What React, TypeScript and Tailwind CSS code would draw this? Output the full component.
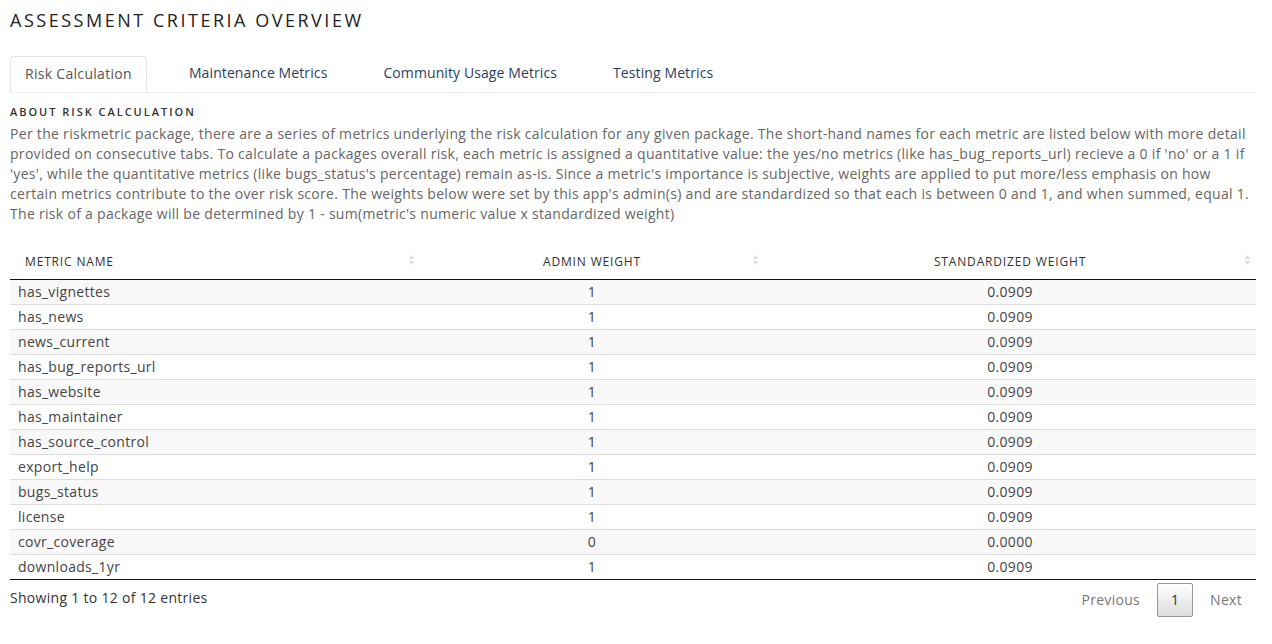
import React from "react";

type Row = { name: string; admin: number; std: string };

const rows: Row[] = [
  { name: "has_vignettes", admin: 1, std: "0.0909" },
  { name: "has_news", admin: 1, std: "0.0909" },
  { name: "news_current", admin: 1, std: "0.0909" },
  { name: "has_bug_reports_url", admin: 1, std: "0.0909" },
  { name: "has_website", admin: 1, std: "0.0909" },
  { name: "has_maintainer", admin: 1, std: "0.0909" },
  { name: "has_source_control", admin: 1, std: "0.0909" },
  { name: "export_help", admin: 1, std: "0.0909" },
  { name: "bugs_status", admin: 1, std: "0.0909" },
  { name: "license", admin: 1, std: "0.0909" },
  { name: "covr_coverage", admin: 0, std: "0.0000" },
  { name: "downloads_1yr", admin: 1, std: "0.0909" },
];

const tabs = ["Risk Calculation", "Maintenance Metrics", "Community Usage Metrics", "Testing Metrics"];

function SortIcon() {
  return (
    <svg width="7" height="12" viewBox="0 0 7 12" className="absolute right-[5px] top-1/2 -translate-y-1/2">
      <path d="M3.5 1 L6.5 5 L0.5 5 Z" fill="#dedede" />
      <path d="M3.5 11 L6.5 7 L0.5 7 Z" fill="#dedede" />
    </svg>
  );
}

export default function App() {
  return (
    <div
      className="min-h-[644px] bg-white pl-[10px] pr-[16px] tracking-[0.3px] text-[#555]"
      style={{ fontFamily: "'Open Sans', 'Noto Sans', sans-serif" }}
    >
      <h2 className="pt-[9px] text-[18px] leading-[22px] tracking-[0.14em] text-[#222]">ASSESSMENT CRITERIA OVERVIEW</h2>

      <div className="mt-[25px] flex border-b border-[#eee]">
        {tabs.map((t, i) => (
          <div
            key={t}
            className={
              i === 0
                ? "-mb-px h-[36px] rounded-t-[4px] border border-[#e5e5e5] border-b-white bg-white px-[14px] text-[14px] leading-[34px] text-[#555]"
                : i === 1
                  ? "ml-[14px] h-[36px] px-[28px] text-[14px] leading-[34px] tracking-[0.1px] text-[#2c3e60]"
                  : "h-[36px] px-[28px] text-[14px] leading-[34px] tracking-[0.1px] text-[#2c3e60]"
            }
          >
            {t}
          </div>
        ))}
      </div>

      <h5 className="mt-[12px] text-[11px] font-semibold leading-[14px] tracking-[0.18em] text-[#333]">ABOUT RISK CALCULATION</h5>
      <p className="mt-[5px] text-[14px] leading-[20px] text-[#666]">
        Per the riskmetric package, there are a series of metrics underlying the risk calculation for any given package. The short-hand names for each metric are listed below with more detail provided on consecutive tabs. To calculate a packages overall risk, each metric is assigned a quantitative value: the yes/no metrics (like has_bug_reports_url) recieve a 0 if 'no' or a 1 if 'yes', while the quantitative metrics (like bugs_status's percentage) remain as-is. Since a metric's importance is subjective, weights are applied to put more/less emphasis on how certain metrics contribute to the over risk score. The weights below were set by this app's admin(s) and are standardized so that each is between 0 and 1, and when summed, equal 1. The risk of a package will be determined by 1 - sum(metric's numeric value x standardized weight)
      </p>

      <table className="mt-[17px] w-full border-collapse text-[14px]">
        <thead>
          <tr className="border-b border-[#111]">
            <th className="relative h-[38px] w-[410px] pl-[15px] pt-[4px] text-left text-[12px] font-normal tracking-[0.07em] text-[#333]">
              METRIC NAME
              <SortIcon />
            </th>
            <th className="relative h-[38px] w-[344px] pt-[4px] text-center text-[12px] font-normal tracking-[0.07em] text-[#333]">
              ADMIN WEIGHT
              <SortIcon />
            </th>
            <th className="relative h-[38px] pt-[4px] text-center text-[12px] font-normal tracking-[0.07em] text-[#333]">
              STANDARDIZED WEIGHT
              <SortIcon />
            </th>
          </tr>
        </thead>
        <tbody>
          {rows.map((r, i) => (
            <tr key={r.name} className={(i % 2 === 0 ? "bg-[#f9f9f9] " : "bg-white ") + (i === 0 ? "" : "border-t border-[#ddd]")}>
              <td className="h-[24px] pl-[8px] leading-[24px] text-[#444]">{r.name}</td>
              <td className="h-[24px] text-center leading-[24px] text-[#444]">{r.admin}</td>
              <td className="h-[24px] text-center leading-[24px] text-[#444]">{r.std}</td>
            </tr>
          ))}
        </tbody>
      </table>
      <div className="border-t border-[#111]" />

      <div className="flex items-start justify-between pt-[3px]">
        <div className="pt-[5px] text-[14px] leading-[20px] text-[#333]">Showing 1 to 12 of 12 entries</div>
        <div className="flex items-center text-[14px]">
          <span className="px-[14px] leading-[34px] text-[#777]">Previous</span>
          <span className="mx-[3px] h-[34px] w-[36px] rounded-[2px] border border-[#979797] bg-gradient-to-b from-white to-[#dcdcdc] text-center leading-[32px] text-[#333]">
            1
          </span>
          <span className="px-[14px] leading-[34px] text-[#777]">Next</span>
        </div>
      </div>
    </div>
  );
}
